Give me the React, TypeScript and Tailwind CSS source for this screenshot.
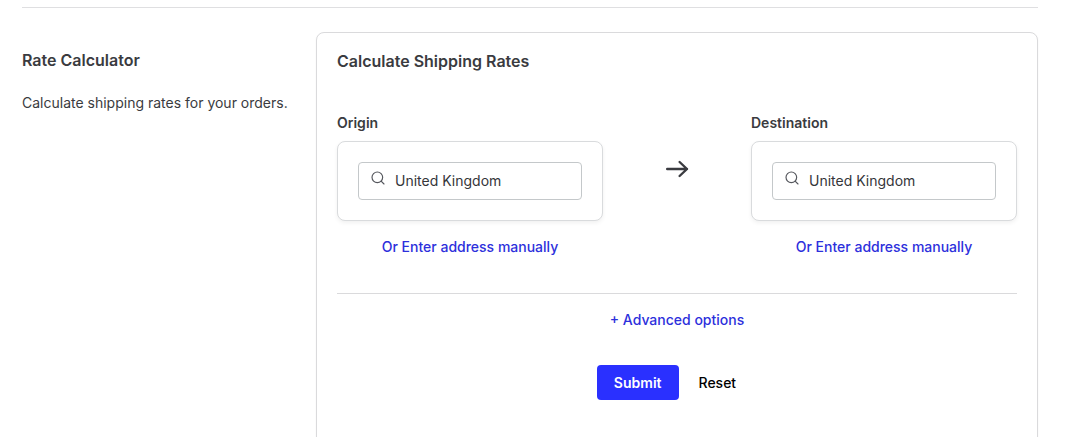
import React from 'react';
import { Search } from 'lucide-react';

interface AddressFieldProps {
  id: string;
  label: string;
  value: string;
  onChange: (value: string) => void;
}

function AddressField({ id, label, value, onChange }: AddressFieldProps) {
  return (
    <div className="flex flex-1 flex-col max-w-[266px]">
      <label htmlFor={id} className="text-sm font-semibold text-[#3a3b40]">
        {label}
      </label>
      <div className="mt-2 rounded-lg border border-[#d9dbdd] bg-white p-5 shadow-[0_2px_4px_rgba(0,0,0,0.06)]">
        <div className="relative">
          <Search
            size={16}
            strokeWidth={1.75}
            className="pointer-events-none absolute left-3 top-2 text-[#55575d]"
          />
          <input
            id={id}
            type="text"
            value={value}
            onChange={(e) => onChange(e.target.value)}
            className="block h-[38px] w-full rounded border border-[#c4c8ca] bg-white pb-0.5 pl-9 pr-3 text-sm text-[#35363a] outline-none focus:border-[#2a30ff]"
          />
        </div>
      </div>
      <button type="button" className="mt-4 self-center text-sm font-medium text-[#2d30dc]">
        Or Enter address manually
      </button>
    </div>
  );
}

function Arrow() {
  return (
    <svg
      width="24"
      height="24"
      viewBox="0 0 24 24"
      fill="none"
      stroke="currentColor"
      strokeWidth="2.4"
      strokeLinecap="round"
      strokeLinejoin="round"
      aria-hidden="true"
    >
      <path d="M2.2 12H22M14.6 5l7.4 7-7.4 7" />
    </svg>
  );
}

export default function App() {
  const [origin, setOrigin] = React.useState('United Kingdom');
  const [destination, setDestination] = React.useState('United Kingdom');

  const reset = () => {
    setOrigin('United Kingdom');
    setDestination('United Kingdom');
  };

  return (
    <main className="h-screen overflow-hidden bg-white pl-[22px] pr-[39px] pt-[7px] font-['Inter',sans-serif] text-[#3a3b40]">
      <hr className="border-[#dfdfe1]" />

      <div className="mt-6 flex">
        <section className="w-[294px] shrink-0 pt-4">
          <h2 className="text-base font-semibold">Rate Calculator</h2>
          <p className="mt-[21px] text-sm">Calculate shipping rates for your orders.</p>
        </section>

        <form
          onSubmit={(e) => e.preventDefault()}
          className="flex-1 rounded-lg border border-[#dadadc] bg-white px-5 pb-16 pt-4 shadow-xs"
        >
          <h3 className="text-base font-semibold">Calculate Shipping Rates</h3>

          <div className="mt-10 flex justify-between">
            <AddressField id="origin" label="Origin" value={origin} onChange={setOrigin} />
            <div className="flex items-center pb-8">
              <Arrow />
            </div>
            <AddressField
              id="destination"
              label="Destination"
              value={destination}
              onChange={setDestination}
            />
          </div>

          <hr className="mt-9 border-[#dadadc]" />

          <div className="mt-4 flex justify-center">
            <button type="button" className="text-sm font-medium text-[#2d30dc]">
              + Advanced options
            </button>
          </div>

          <div className="mt-[35px] flex justify-center">
            <button
              type="submit"
              className="h-[35px] rounded bg-[#2a30ff] px-[17px] text-sm font-semibold text-white"
            >
              Submit
            </button>
            <button type="button" onClick={reset} className="h-[35px] pl-5 pr-[21px] text-sm font-medium text-black">
              Reset
            </button>
          </div>
        </form>
      </div>
    </main>
  );
}
